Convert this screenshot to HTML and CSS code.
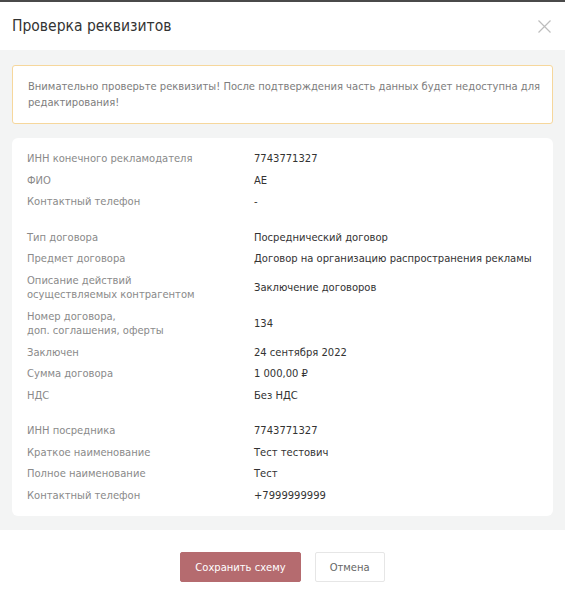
FILE: index.html
```html
<!DOCTYPE html>
<html lang="ru">
<head>
<meta charset="utf-8">
<link rel="stylesheet" href="styles.css">
</head>
<body>
<div class="modal">
  <div class="header">
    <h1 class="title">Проверка реквизитов</h1>
    <svg class="close" width="13" height="13" viewBox="0 0 13 13"><path d="M0.5 0.5L12.5 12.5M12.5 0.5L0.5 12.5" stroke="#bdbdbd" stroke-width="1.2" fill="none"/></svg>
  </div>
  <div class="body">
    <div class="warning">Внимательно проверьте реквизиты! После подтверждения часть данных будет недоступна для редактирования!</div>
    <div class="card">
      <div class="group">
        <div class="row"><div class="label">ИНН конечного рекламодателя</div><div class="value">7743771327</div></div>
        <div class="row"><div class="label">ФИО</div><div class="value">АЕ</div></div>
        <div class="row"><div class="label">Контактный телефон</div><div class="value">-</div></div>
      </div>
      <div class="group">
        <div class="row"><div class="label">Тип договора</div><div class="value">Посреднический договор</div></div>
        <div class="row"><div class="label">Предмет договора</div><div class="value">Договор на организацию распространения рекламы</div></div>
        <div class="row"><div class="label">Описание действий<br>осуществляемых контрагентом</div><div class="value">Заключение договоров</div></div>
        <div class="row"><div class="label">Номер договора,<br>доп. соглашения, оферты</div><div class="value">134</div></div>
        <div class="row"><div class="label">Заключен</div><div class="value">24 сентября 2022</div></div>
        <div class="row"><div class="label">Сумма договора</div><div class="value">1 000,00 ₽</div></div>
        <div class="row"><div class="label">НДС</div><div class="value">Без НДС</div></div>
      </div>
      <div class="group">
        <div class="row"><div class="label">ИНН посредника</div><div class="value">7743771327</div></div>
        <div class="row"><div class="label">Краткое наименование</div><div class="value">Тест тестович</div></div>
        <div class="row"><div class="label">Полное наименование</div><div class="value">Тест</div></div>
        <div class="row"><div class="label">Контактный телефон</div><div class="value">+7999999999</div></div>
      </div>
    </div>
  </div>
  <div class="footer">
    <button class="btn btn-primary">Сохранить схему</button>
    <button class="btn btn-default">Отмена</button>
  </div>
</div>
</body>
</html>
```
FILE: styles.css
```css
html, body {
  margin: 0;
  padding: 0;
  background: #ffffff;
}
body {
  font-family: "DejaVu Sans Condensed", "DejaVu Sans", sans-serif;
  font-size: 11.1px;
  color: #333;
}
.modal {
  width: 565px;
  height: 600px;
  border-top: 2px solid #4a4a4a;
  box-sizing: border-box;
  display: flex;
  flex-direction: column;
}
.header {
  height: 48px;
  display: flex;
  align-items: center;
  justify-content: space-between;
  padding: 0 14px 0 12px;
}
.title {
  margin: 0;
  font-size: 15.5px;
  font-weight: normal;
  color: #333;
}
.close {
  display: block;
}
.body {
  background: #f3f4f4;
  padding: 15px 12px 14px;
  display: flex;
  flex-direction: column;
  gap: 14px;
}
.warning {
  background: #fff;
  border: 1px solid #f6d79c;
  border-radius: 3px;
  padding: 13px 6px 12px 15px;
  color: #7d7d7d;
  line-height: 16px;
}
.card {
  background: #fff;
  border-radius: 6px;
  padding: 14px 15px 13px;
  display: flex;
  flex-direction: column;
  gap: 21px;
}
.group {
  display: flex;
  flex-direction: column;
  gap: 7px;
}
.row {
  display: flex;
  align-items: center;
  line-height: 14.5px;
}
.label {
  width: 227px;
  flex: none;
  color: #8a8a8a;
}
.value {
  color: #333;
}
.footer {
  flex: 1;
  display: flex;
  align-items: center;
  justify-content: center;
  gap: 14px;
  padding-top: 4px;
}
.btn {
  font-family: inherit;
  font-size: 11.1px;
  height: 30px;
  border-radius: 2px;
  padding: 0 14px;
  cursor: pointer;
}
.btn-primary {
  background: #b56b6f;
  border: 1px solid #b56b6f;
  color: #fff;
}
.btn-default {
  background: #fff;
  border: 1px solid #e6e6e6;
  color: #666;
}
```
